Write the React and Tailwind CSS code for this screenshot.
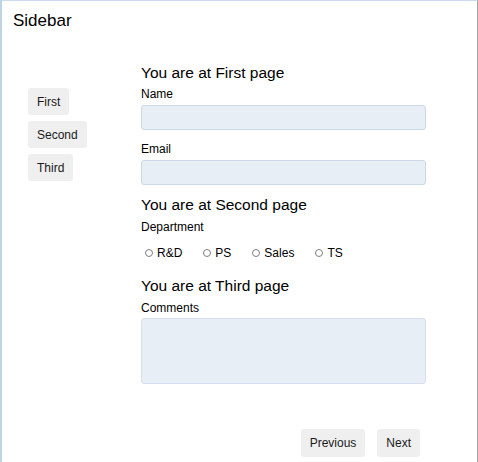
import React from "react";

function SideButton({ children }) {
  return (
    <button className="h-[27px] px-[9px] rounded-[3px] bg-[#efefef] text-[12px] leading-[14px] text-[#1a1a1a] self-start">
      {children}
    </button>
  );
}

function Radio({ label }) {
  return (
    <label className="flex items-center gap-[4px]">
      <span className="w-[8px] h-[8px] rounded-full border border-[#808080] bg-white"></span>
      <span>{label}</span>
    </label>
  );
}

export default function App() {
  return (
    <div className="w-[478px] h-[462px] overflow-hidden bg-white border-t border-l-2 border-r border-t-[#cadced] border-l-[#bcd3e8] border-r-[#a6a6a6] font-['Liberation_Sans',Arial,sans-serif] text-black">
      <div className="pt-[10px] pl-[11px] text-[17px] leading-5">Sidebar</div>
      <div className="flex">
        <nav className="w-[139px] pl-[26px] pt-[57px] flex flex-col gap-[6px]">
          <SideButton>First</SideButton>
          <SideButton>Second</SideButton>
          <SideButton>Third</SideButton>
        </nav>
        <main className="w-[285px] pt-[32px] flex flex-col">
          <h2 className="text-[15.5px] leading-5">You are at First page</h2>
          <label className="mt-[4px] text-[12px] leading-[14px]">Name</label>
          <input className="mt-[4px] h-[25px] w-full rounded-[3px] border border-[#cbd8e7] bg-[#e8eef6] outline-none" />
          <label className="mt-[12px] text-[12px] leading-[14px]">Email</label>
          <input className="mt-[4px] h-[25px] w-full rounded-[3px] border border-[#cbd8e7] bg-[#e8eef6] outline-none" />

          <h2 className="mt-[10px] text-[15.5px] leading-5">You are at Second page</h2>
          <label className="mt-[5px] text-[12px] leading-[14px]">Department</label>
          <div className="mt-[12px] pl-[4px] flex gap-[21px] text-[12px] leading-[14px]">
            <Radio label="R&D" />
            <Radio label="PS" />
            <Radio label="Sales" />
            <Radio label="TS" />
          </div>

          <h2 className="mt-[16px] text-[15.5px] leading-5">You are at Third page</h2>
          <label className="mt-[5px] text-[12px] leading-[14px]">Comments</label>
          <textarea className="mt-[3px] h-[66px] w-full resize-none rounded-[3px] border border-[#d5e0ec] bg-[#e8eef6] outline-none" />

          <div className="mt-[45px] pr-[6px] flex justify-end gap-[12px]">
            <button className="h-[28px] px-[9px] rounded-[3px] bg-[#efefef] text-[12px] leading-[14px] text-[#1a1a1a]">
              Previous
            </button>
            <button className="h-[28px] px-[9px] rounded-[3px] bg-[#efefef] text-[12px] leading-[14px] text-[#1a1a1a]">
              Next
            </button>
          </div>
        </main>
      </div>
    </div>
  );
}
